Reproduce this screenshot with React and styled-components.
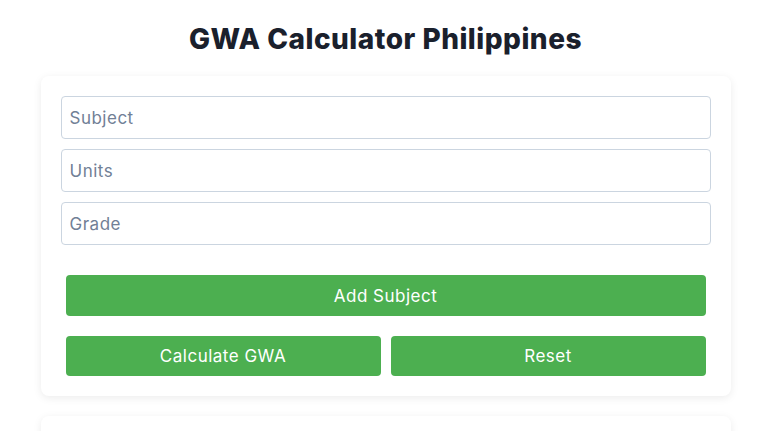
import React from "react";
import styled, { createGlobalStyle } from "styled-components";

const Global = createGlobalStyle`
  * { box-sizing: border-box; }
  body {
    margin: 0;
    background: #ffffff;
    font-family: "Inter", "Open Sans", sans-serif;
  }
`;

const Page = styled.div`
  max-width: 690px;
  margin: 0 auto;
  padding-top: 20px;
`;

const Title = styled.h1`
  margin: 0 0 18px;
  text-align: center;
  font-size: 28px;
  line-height: 38px;
  font-weight: 800;
  color: #1a202c;
  letter-spacing: 0.5px;
`;

const Card = styled.div`
  background: #fff;
  border-radius: 8px;
  box-shadow: 0 2px 8px rgba(0, 0, 0, 0.08);
  padding: 20px;
  margin-bottom: 20px;
  min-height: ${(p) => p.$minHeight || "auto"};
`;

const Fields = styled.div`
  display: flex;
  flex-direction: column;
  gap: 10px;
`;

const Input = styled.input`
  width: 100%;
  height: 43px;
  padding: 0 8px;
  border: 1px solid #cbd5e0;
  border-radius: 4px;
  font-family: inherit;
  font-size: 17px;
  letter-spacing: 0.5px;
  color: #2d3748;
  background: #fff;
  &::placeholder { color: #718096; }
`;

const Actions = styled.div`
  display: flex;
  flex-direction: column;
  gap: 20px;
  margin: 30px 5px 0;
`;

const Row = styled.div`
  display: grid;
  grid-template-columns: 1fr 1fr;
  gap: 10px;
`;

const Button = styled.button`
  height: ${(p) => (p.$tall ? "41px" : "40px")};
  border: none;
  border-radius: 4px;
  background: #4caf50;
  color: #fff;
  font-family: inherit;
  font-size: 17px;
  letter-spacing: 0.5px;
  font-weight: 400;
  cursor: pointer;
`;

export default function App() {
  return (
    <>
      <Global />
      <Page>
        <Title>GWA Calculator Philippines</Title>
        <Card>
          <Fields>
            <Input placeholder="Subject" />
            <Input placeholder="Units" />
            <Input placeholder="Grade" />
          </Fields>
          <Actions>
            <Button $tall>Add Subject</Button>
            <Row>
              <Button>Calculate GWA</Button>
              <Button>Reset</Button>
            </Row>
          </Actions>
        </Card>
        <Card $minHeight="100px" />
      </Page>
    </>
  );
}
